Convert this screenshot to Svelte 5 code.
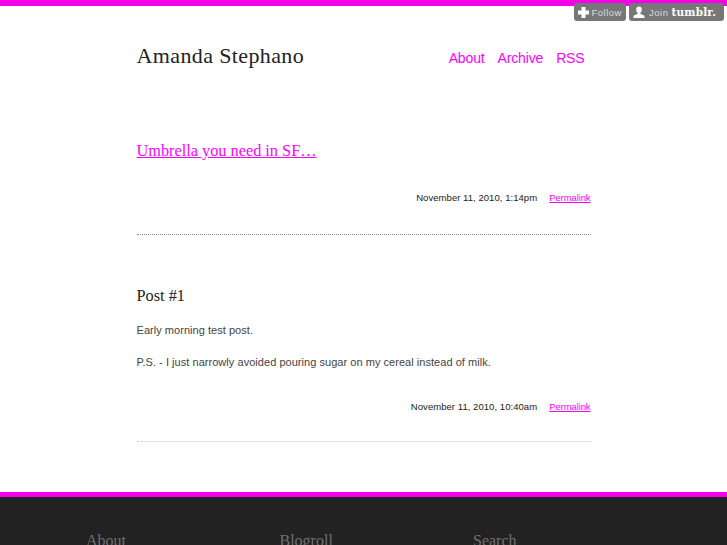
<script>
  const links = ['About', 'Archive', 'RSS'];
  const footer = ['About', 'Blogroll', 'Search'];
</script>

<!-- Tumblr controls float over the page -->
<div class="controls">
  <a class="ctl follow" href="#follow">
    <svg width="13" height="13" viewBox="0 0 13 13"><path d="M4.500 1h4v3.500H12v4H8.500V12h-4V8.500H1v-4h3.500z" fill="#fff" /></svg>
    <span>Follow</span>
  </a>
  <a class="ctl join" href="#join">
    <svg width="14" height="13" viewBox="0 0 14 13"><path d="M7 0.500c1.800 0 2.800 1.300 2.800 3 0 1.400-.6 2.600-1.400 3.200v1.200c1.600.5 4.100 1 4.100 2.600V12H1.500v-1.500c0-1.600 2.500-2.100 4.100-2.600V6.700C4.800 6.100 4.200 4.900 4.200 3.500c0-1.700 1-3 2.800-3z" fill="#fff" /></svg>
    <span>Join</span>
    <b>tumblr.</b>
  </a>
</div>

<div class="page">
  <header>
    <h1>Amanda Stephano</h1>
    <nav>
      {#each links as link}
        <a href="#{link}">{link}</a>
      {/each}
    </nav>
  </header>

  <article class="first">
    <h2><a href="#umbrella">Umbrella you need in SF…</a></h2>
    <div class="meta">
      <span>November 11, 2010, 1:14pm</span>
      <a href="#p1">Permalink</a>
    </div>
  </article>

  <article class="second">
    <h2>Post #1</h2>
    <p>Early morning test post.</p>
    <p>P.S. - I just narrowly avoided pouring sugar on my cereal instead of milk.</p>
    <div class="meta">
      <span>November 11, 2010, 10:40am</span>
      <a href="#p2">Permalink</a>
    </div>
  </article>
</div>

<footer>
  {#each footer as title}
    <h3>{title}</h3>
  {/each}
</footer>

<style>
  :global(html), :global(body) {
    margin: 0;
    height: 545px;
    overflow: hidden;
    background: #fff;
  }
  :global(body) {
    border-top: 6px solid #f600ea;
    box-sizing: border-box;
  }
  .controls {
    position: absolute;
    top: 3px;
    right: 3px;
    display: flex;
    gap: 3px;
  }
  .ctl {
    display: flex;
    align-items: center;
    height: 18px;
    background: #777;
    border-radius: 3px;
    color: #ddd;
    font: 9.500px "Liberation Sans", sans-serif;
    letter-spacing: 0.5px;
    text-decoration: none;
    box-sizing: border-box;
  }
  .follow {
    width: 52.500px;
    padding-left: 3px;
    gap: 2px;
  }
  .join {
    width: 95px;
    padding-left: 3px;
    gap: 3px;
  }
  .ctl b {
    font: bold 10.500px "DejaVu Serif", serif;
    color: #fff;
    letter-spacing: 0.2px;
  }
  .page {
    width: 454px;
    margin: 0 auto;
  }
  header {
    display: flex;
    justify-content: space-between;
    padding-top: 36px;
    height: 66px;
  }
  h1 {
    margin: 0;
    font: normal 22px/28px "Liberation Serif", serif;
    letter-spacing: 0.38px;
    color: #222;
  }
  nav {
    display: flex;
    gap: 13px;
    padding: 7px 6px 0 0;
  }
  nav a {
    font: 14px/18px "Liberation Sans", sans-serif;
    letter-spacing: -0.15px;
    color: #f0f;
    text-decoration: none;
  }
  h2 {
    margin: 0;
    font: normal 16.300px/22px "Liberation Serif", serif;
    color: #222;
  }
  h2 a {
    color: #f0f;
  }
  article {
    border-bottom: 1px dotted #888;
  }
  .first {
    padding-top: 32px;
    height: 94px;
  }
  .second {
    margin-top: 50px;
    height: 156px;
    border-bottom-color: #ccc;
  }
  p {
    margin: 0 0 13px;
    font: 11px/19px "Liberation Sans", sans-serif;
    letter-spacing: 0.04px;
    color: #444;
  }
  .second h2 {
    margin-bottom: 14px;
  }
  .meta {
    display: flex;
    justify-content: flex-end;
    gap: 12px;
    font: 9.500px/14px "Liberation Sans", sans-serif;
    color: #222;
    letter-spacing: 0.05px;
  }
  .first .meta {
    margin-top: 29px;
  }
  .second .meta {
    margin-top: 28px;
  }
  .meta a {
    color: #f0f;
    letter-spacing: -0.1px;
  }
  footer {
    margin-top: 50px;
    border-top: 5px solid #f600ea;
    background: #222;
    display: flex;
    padding: 32px 0 0 86px;
    height: 60px;
  }
  h3 {
    margin: 0;
    width: 193.500px;
    font: normal 16px/24px "Liberation Serif", serif;
    color: #6f6f6f;
  }
</style>
